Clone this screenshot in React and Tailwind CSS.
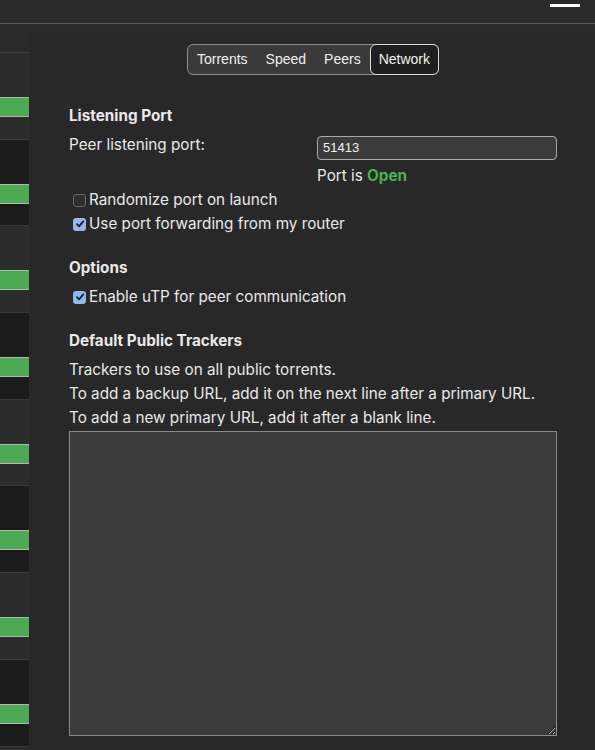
import React from "react";

const rows = [0, 1, 2, 3, 4, 5, 6, 7];

function Check({ checked }) {
  return (
    <span
      className={
        "ml-[4px] mr-[3px] inline-flex h-[13px] w-[13px] shrink-0 items-center justify-center rounded-[3px] " +
        (checked ? "bg-[#8db8f2]" : "border border-[#6a6a6a] bg-[#2e2e2e]")
      }
    >
      {checked && (
        <svg width="10" height="10" viewBox="0 0 10 10">
          <path d="M2 5.2 L4.1 7.4 L8.2 2.4" fill="none" stroke="#1a1a1a" strokeWidth="1.7" strokeLinecap="round" strokeLinejoin="round" />
        </svg>
      )}
    </span>
  );
}

export default function App() {
  return (
    <div
      className="relative h-[750px] w-[595px] overflow-hidden bg-[#2a2a2a] text-[#e9e9e9]"
      style={{ fontFamily: "Inter, 'Liberation Sans', sans-serif" }}
    >
      <div className="flex h-[24px] items-start justify-end border-b border-[#595959] bg-[#2a2a2a] pr-[15px] pt-[4px]">
        <div className="h-[3px] w-[30px] bg-white" />
      </div>
      <div className="flex h-[29px] items-start justify-end gap-[50px] border-b border-[#3c3c3c] pr-[15px] pt-[8px] text-[12px] text-[#cfcfcf]">
        <span>Ω 1 of 14</span>
        <span>0 B/s ↓ 0 B/s ↑</span>
      </div>
      {rows.map((i) => (
        <div
          key={i}
          className={
            "h-[86.7px] border-b border-[#3a3a3a] pt-[44px] " +
            (i % 2 === 0 ? "bg-[#2c2c2c]" : "bg-[#1b1b1b]")
          }
        >
          <div className="h-[20px] border-y border-[#b5b5b5] bg-[#4caa52]" />
        </div>
      ))}

      <div className="absolute bottom-0 left-[29px] right-0 top-[33px] bg-[#282828] pl-[40px] pr-[38px] text-[15.25px]">
        <div className="flex justify-center pt-[11px]">
          <div
            className="flex h-[31px] items-stretch rounded-[6px] border border-[#8c8c8c] bg-[#3a3a3a] text-[14px] text-[#f0f0f0]"
            style={{ fontFamily: "'Liberation Sans', Arial, sans-serif" }}
          >
            <div className="flex items-center pl-[9px] pr-[9px]">Torrents</div>
            <div className="flex items-center px-[9px]">Speed</div>
            <div className="flex items-center px-[9px]">Peers</div>
            <div className="-my-px -mr-px flex items-center rounded-[6px] border border-[#dcdcdc] bg-[#1f1f1f] px-[8px]">
              Network
            </div>
          </div>
        </div>

        <div className="mt-[31px] leading-[20px] font-bold">Listening Port</div>
        <div className="mt-[9px] flex items-start">
          <div className="w-[248px] leading-[20px]">Peer listening port:</div>
          <div className="flex flex-1 flex-col">
            <div
              className="mt-[1px] flex h-[24px] items-center rounded-[4px] border border-[#a8a8a8] bg-[#3b3b3b] px-[5px] text-[13px] text-[#f2f2f2]"
              style={{ fontFamily: "'Liberation Sans', Arial, sans-serif" }}
            >
              51413
            </div>
            <div className="mt-[6px] leading-[20px]">
              Port is <span className="font-bold text-[#4caf50]">Open</span>
            </div>
          </div>
        </div>
        <div className="mt-[2px] flex h-[24px] items-center">
          <Check checked={false} />
          <span>Randomize port on launch</span>
        </div>
        <div className="flex h-[24px] items-center">
          <Check checked={true} />
          <span>Use port forwarding from my router</span>
        </div>

        <div className="mt-[22px] leading-[20px] font-bold">Options</div>
        <div className="mt-[7px] flex h-[24px] items-center">
          <Check checked={true} />
          <span>Enable uTP for peer communication</span>
        </div>

        <div className="mt-[22px] leading-[20px] font-bold">Default Public Trackers</div>
        <div className="mt-[7px] leading-[24px]">
          <div>Trackers to use on all public torrents.</div>
          <div>To add a backup URL, add it on the next line after a primary URL.</div>
          <div>To add a new primary URL, add it after a blank line.</div>
        </div>
        <textarea
          className="mt-[1px] block h-[305px] w-full resize border border-[#8a8a8a] bg-[#3b3b3b] text-[13px] text-white outline-none"
          style={{ colorScheme: "dark" }}
          defaultValue=""
        />
      </div>
    </div>
  );
}
